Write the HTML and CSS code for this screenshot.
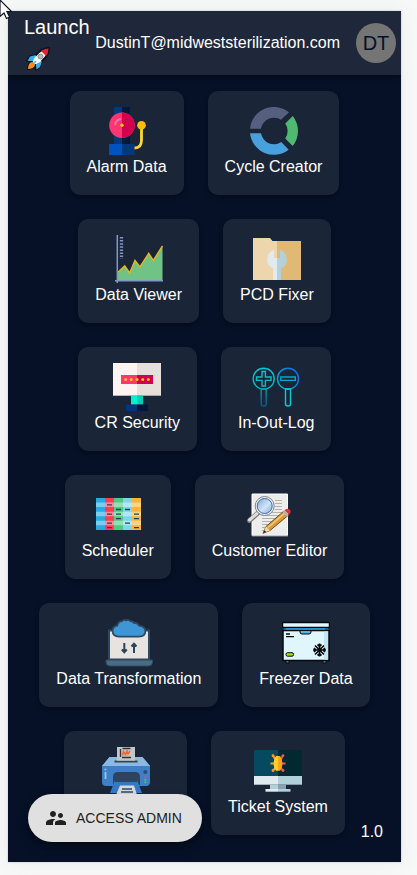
FILE: index.html
```html
<!DOCTYPE html>
<html lang="en">
<head>
<meta charset="utf-8">
<meta name="viewport" content="width=device-width, initial-scale=1">
<title>Launch</title>
<link rel="stylesheet" href="styles.css">
</head>
<body>
<svg class="pointer" viewBox="0 0 14 20" aria-hidden="true"><path d="M-4-4L11.500 11.500H7L9.500 17L6.500 18.500L4 13L0 16.500V0Z" fill="#fff" stroke="#111326" stroke-width="1.200"/></svg>
<div class="app">
  <header class="bar">
    <h1 class="brand">Launch
      <svg class="rocket" viewBox="0 0 24 24" aria-hidden="true">
        <path d="M23 1Q16 1 10 8L4 9.500L1 14L6 14.500L3 17L2 22L7 21L9.500 18L10 23L14 20L16 14Q23 8 23 1Z" fill="#fff" stroke="#101218" stroke-width="2" stroke-linejoin="round"/>
        <path d="M10 8L4 9.500L1.500 14L7 14ZM16 14L14 20L10.500 22.500L10 17Z" fill="#2fb2ef"/>
        <path d="M6 15Q2 16 2 22Q8 22 9 18Z" fill="#ff8b1f"/>
        <path d="M22.500 1.500Q18 1.500 15 4L20 9Q22.500 6 22.500 1.500Z" fill="#e5202f"/>
        <path d="M7 17L10 14" stroke="#2fb2ef" stroke-width="1.500"/>
        <circle cx="14.500" cy="9.500" r="2.500" fill="#b5b8bd" stroke="#858b93"/>
      </svg>
    </h1>
    <span class="email">DustinT@midweststerilization.com</span>
    <span class="avatar">DT</span>
  </header>

  <main class="tiles">
    <a class="tile" href="#">
      <svg viewBox="0 0 48 48" aria-hidden="true"><path d="M11 0h8v38h-8z" fill="#003a7d"/><path d="M19 0h8v38h-8z" fill="#001a3d"/><path d="M6 37h13v11H6z" fill="#0053bf"/><path d="M19 37h12.500v11H19z" fill="#003a7d"/><circle cx="19" cy="18.300" r="12.800" fill="#ff3574"/><path d="M19 5.500a12.800 12.800 0 0 1 0 25.600z" fill="#d0004f"/><path d="M12 18a7 7 0 0 1 6-6" fill="none" stroke="#ff7199" stroke-width="2"/><circle cx="19" cy="18.300" r="1.700" fill="#ffc80a"/><path d="M38.500 19v14q0 8-7 8" fill="none" stroke="#ffd72e" stroke-width="2.800"/><circle cx="38.500" cy="18.300" r="4.300" fill="#ffbd00"/></svg>
      <span>Alarm Data</span>
    </a>
    <a class="tile" href="#">
      <svg viewBox="0 0 48 48" aria-hidden="true"><path d="M0 21.700A24 24 0 0 1 39 5.300L31 12.700A13.200 13.200 0 0 0 11 21.700Z" fill="#556080"/><path d="M42.700 9A24 24 0 0 1 42.700 39L35.300 31.500A13.200 13.200 0 0 0 35.300 16.500Z" fill="#4fba6f"/><path d="M0 26.300A24 24 0 0 0 38.700 42.700L31.300 35A13.200 13.200 0 0 1 11 26.300Z" fill="#48a0dc"/></svg>
      <span>Cycle Creator</span>
    </a>
    <a class="tile" href="#">
      <svg viewBox="0 0 48 48" aria-hidden="true"><path d="M3 37.300L9.700 31L14.700 38L20 25.500L25 32L33.700 18.500L38.300 25.500L47.500 11V45H3Z" fill="#71c285"/><path d="M3 37.300L9.700 31L14.700 38L20 25.500L25 32L33.700 18.500L38.300 25.500L47.500 11" fill="none" stroke="#e3b522" stroke-width="1.500"/><path d="M2.300 0V48M0 45.700H48" stroke="#8296c9" stroke-width="1.500"/><path d="M6.500 2V24" stroke="#8296c9" stroke-width="3.300" stroke-dasharray="1.500 1.600"/></svg>
      <span>Data Viewer</span>
    </a>
    <a class="tile" href="#">
      <svg viewBox="0 0 48 48" aria-hidden="true"><path d="M0 3H17L19.500 6H24V45H0Z" fill="#edd5ae"/><path d="M24 6H48V45H24Z" fill="#e0ba75"/><path d="M21 15v8h3v22h-4V33.500A10 10 0 0 1 21 15z" fill="#e1ebef"/><path d="M27 15v8h-3v22h4V33.500A10 10 0 0 0 27 15z" fill="#b2d1d8"/></svg>
      <span>PCD Fixer</span>
    </a>
    <a class="tile" href="#">
      <svg viewBox="0 0 48 48" aria-hidden="true"><path d="M0 0h24v32.700H0z" fill="#fff3f2"/><path d="M24 0h24v32.700H24z" fill="#e7dfda"/><path d="M8 12h16v9H8z" fill="#ff3574"/><path d="M24 12h16v9H24z" fill="#d0004f"/><g fill="#ffc80a"><circle cx="12.700" cy="16.500" r="1.500"/><circle cx="18.200" cy="16.500" r="1.500"/><circle cx="24" cy="16.500" r="1.500"/><circle cx="29.700" cy="16.500" r="1.500"/><circle cx="35.300" cy="16.500" r="1.500"/></g><path d="M18 32.700h6v9h-6z" fill="#00f0d1"/><path d="M24 32.700h6v9h-6z" fill="#00cdb5"/><path d="M13 41.500h11V48H13z" fill="#00367a"/><path d="M24 41.500h11V48H24z" fill="#00193b"/></svg>
      <span>CR Security</span>
    </a>
    <a class="tile" href="#">
      <svg viewBox="0 0 48 48" aria-hidden="true">
        <defs><linearGradient id="in" x1="0" y1="0" x2="0" y2="1"><stop offset="0" stop-color="#07c6d2"/><stop offset="1" stop-color="#08b4c6"/></linearGradient><linearGradient id="stick" x1="0" y1="0" x2="0" y2="1"><stop offset="0" stop-color="#0899b4"/><stop offset="1" stop-color="#095a86"/></linearGradient><linearGradient id="out" x1="1" y1="0" x2="0" y2="1"><stop offset="0" stop-color="#0a6ce5"/><stop offset="1" stop-color="#08b8da"/></linearGradient></defs>
        <g fill="none" stroke="url(#in)" stroke-width="1.400"><circle cx="11.700" cy="15.700" r="10.500"/><path d="M10 8.500h3.400V14h5.600v3.400h-5.600V23H10v-5.600H4.500V14H10z"/></g>
        <path d="M9.200 26h5v15q0 2-2.500 2t-2.500-2z" fill="none" stroke="url(#stick)" stroke-width="1.400"/>
        <g fill="none" stroke-width="1.400"><circle cx="36" cy="15.700" r="10.500" stroke="url(#out)"/><path d="M28.800 14h14.500v3.400H28.800z" stroke="#09a0e0"/><path d="M33.500 26h5v15q0 2-2.500 2t-2.500-2z" stroke="#08cbd6"/></g>
      </svg>
      <span>In-Out-Log</span>
    </a>
    <a class="tile" href="#">
      <svg viewBox="0 0 48 48" aria-hidden="true"><path d="M2 7h9v32H2z" fill="#29abe2"/><path d="M11 7h9v32h-9z" fill="#ff3d52"/><path d="M20 7h9v32h-9z" fill="#4dcb84"/><path d="M29 7h9v32h-9z" fill="#7cd7ed"/><path d="M38 7h9v32h-9z" fill="#ffb33c"/><path d="M2 11.600h45v4.500H2zM2 20.700h45v4.500H2zM2 29.800h45v4.500H2z" fill="#fff" opacity=".4"/><path d="M13 13.900h5m-5 9.200h5m-5 9h5m-5 4.600h5M22 18.500h5m-5 4.600h5m-5 4.500h5M31 18.500h5m-5 13.600h5M40 23.100h5m-5 4.500h5m-5 9.100h5" stroke="#23425a" stroke-width="1.300"/></svg>
      <span>Scheduler</span>
    </a>
    <a class="tile" href="#">
      <svg viewBox="0 0 48 48" aria-hidden="true">
        <defs><linearGradient id="lens" x1="0" y1="0" x2="1" y2="1"><stop offset="0" stop-color="#7fa8df"/><stop offset=".55" stop-color="#d2e4f7"/><stop offset="1" stop-color="#7aaae3"/></linearGradient></defs>
        <path d="M6 3h35.500v41.500H6z" fill="#ededeb" stroke="#fff"/><path d="M6 45h36" stroke="#8e9296" stroke-width="1"/><path d="M29 9.500h7m-7 3h7m-7 3h7m-7 3h7M24 21.500h12M16 24.500h20m-20 3h14m-14 3h12m-12 3h10m-10 3h7m-7 3h4" stroke="#b0b1b1" stroke-width="1"/>
        <path d="M12 22L3.500 29.500" stroke="#777" stroke-width="5" stroke-linecap="round"/><path d="M11 22.500L3.500 29" stroke="#dedede" stroke-width="3" stroke-linecap="round"/>
        <circle cx="18.700" cy="15" r="9.500" fill="#eee" stroke="#858585"/><circle cx="18.700" cy="15" r="7.500" fill="url(#lens)" stroke="#3c6eaf"/>
        <path d="M17 42.300L20 35.500L38 20L42 24.500L24 39.500Z" fill="#d69a3b" stroke="#7a4b16"/><path d="M22 36.500L39.500 21.500" stroke="#f4cf78" stroke-width="1.500"/><path d="M17 42.300L20 35.500L24 39.500Z" fill="#f1d6a6"/><path d="M17 42.300l1.300-3 2 1.700z" fill="#291d16"/><path d="M36.500 21l2-1.700 4.300 4.700-2 1.700z" fill="#aeb5b8"/><path d="M38.500 19.300Q41 16.500 43.500 18.500T43 23.800z" fill="#ec3030"/>
      </svg>
      <span>Customer Editor</span>
    </a>
    <a class="tile" href="#">
      <svg viewBox="0 0 48 48" aria-hidden="true"><path d="M4 11.500h40v29H4z" fill="#e7e3e0" stroke="#2f4961" stroke-width="2"/><path d="M1 41h46.500v2q0 4-4 4H5q-4 0-4-4z" fill="#4a6c82" stroke="#2f4961"/><path d="M14 16.700Q8.500 16.500 8.500 12Q8.500 7.500 13 7.500Q13.500 3 17.500 3Q19 1 21 2.500Q23 1 25 3Q28 3 28.500 5Q32 4 33.500 7.500Q39.500 8 39.500 12Q39.500 16.700 34 16.700Z" fill="#3d96d5" stroke="#2f4961" stroke-width="3.500" paint-order="stroke"/><path d="M19.300 24v9m-2.500-2.500l2.500 2.700 2.500-2.700M29 34v-9m-2.500 2.500l2.500-2.700 2.500 2.700" fill="none" stroke="#2c4459" stroke-width="2"/></svg>
      <span>Data Transformation</span>
    </a>
    <a class="tile" href="#">
      <svg viewBox="0 0 48 48" aria-hidden="true"><path d="M4 41.500h3v2.500H4zM41 41.500h3v2.500h-3z" fill="#888" stroke="#07090c"/><path d="M1.500 8h45v4h-45z" fill="#1985cc"/><path d="M1 11.500h46v30H1z" fill="#dff6fd" stroke="#07090c" stroke-width="1.500"/><path d="M42 12.500h4v28h-4z" fill="#bfe8f7"/><path d="M1.500 3.500h45q1 0 1 1v3q0 1-1 1h-45q-1 0-1-1v-3q0-1 1-1z" fill="#e4f8fd" stroke="#07090c" stroke-width="1.500"/><path d="M4 10h39" stroke="#249be3" stroke-width="1.500"/><path d="M18 11.500h11v1.500q0 2-2 2h-7q-2 0-2-2z" fill="#4ab7ed" stroke="#07090c"/><path d="M4 15h4M4 17.700h8" stroke="#07090c" stroke-width="1.300"/><rect x="4" y="33.700" width="7.500" height="3.500" rx="1.500" fill="#a2df18" stroke="#07090c"/><g fill="none" stroke="#07090c" stroke-width="1.600"><path d="M37.500 24.500v13M31 31h13M33 26.500l9 9m0-9l-9 9M35.500 25.500l2 2 2-2m-4 11l2-2 2 2M32 29l2 2-2 2m11-4l-2 2 2 2"/></g></svg>
      <span>Freezer Data</span>
    </a>
    <a class="tile tile-printer" href="#" aria-label="Printer">
      <svg viewBox="0 0 48 48" aria-hidden="true"><path d="M7.500 10h33L48 19v16q0 4-4 4H4q-4 0-4-4V19z" fill="#3e7fc5"/><path d="M7.500 10h33L48 19H0z" fill="#8db8e2"/><path d="M12.500 13.500h23v2h-23z" fill="#2f455f"/><path d="M15 0h18v13.700H15z" fill="#c4c6c8"/><path d="M18.500 2v8m2-8.500h8M20 10.500h9" stroke="#30323a" stroke-width="1.300"/><path d="M20.500 8.500l1-4 2 3 1.500-3.500 1 3 2-3" fill="none" stroke="#ee6830" stroke-width="1.600"/><path d="M11 38V30q0-5 5-5h17q5 0 5 5v8z" fill="#2f435c"/><path d="M13 33h22l5 13H8z" fill="#3579c3"/><path d="M13 33h22v2H13z" fill="#24486e"/><path d="M18 38.500h14l3 9.500H14z" fill="#d5d8dc"/><path d="M20 42h10m-11 3h12" stroke="#34475e" stroke-width="1.300"/><path d="M3.500 25v7" stroke="#9ac2ec" stroke-width="1.800"/><circle cx="3.500" cy="22.500" r="1" fill="#9ac2ec"/><circle cx="43.300" cy="25" r="2" fill="#244e7e"/><circle cx="43.300" cy="30" r="1" fill="#e64a61"/><circle cx="43.300" cy="32.800" r="1" fill="#43c878"/><circle cx="43.300" cy="35.300" r="1" fill="#43c878"/></svg>
    </a>
    <a class="tile" href="#">
      <svg viewBox="0 0 48 48" aria-hidden="true"><path d="M0 3h24v26H0z" fill="#054a60"/><path d="M24 3h24v26H24z" fill="#022830"/><path d="M0 29h24v8.700H0z" fill="#e0ebf0"/><path d="M24 29h24v8.700H24z" fill="#b1d0d7"/><path d="M16 37.700h8V42h-8z" fill="#b1d0d7"/><path d="M24 37.700h8V42h-8z" fill="#86a2b4"/><path d="M11.500 42H24v2.700H11.500z" fill="#e0ebf0"/><path d="M24 42h12.500v2.700H24z" fill="#b1d0d7"/><path d="M21 12l-2-3.500M20 16.500h-3.500M21 21l-2 3" stroke="#ff9a20" stroke-width="2"/><path d="M27 12l2-3.500M28 16.500h3.500M27 21l2 3" stroke="#f15a51" stroke-width="2"/><path d="M24 9h-2q-2.500 3-2.500 7.500T22 23.700h2z" fill="#ffd126"/><path d="M24 9h2q2.500 3 2.500 7.500T26 23.700h-2z" fill="#ffa51f"/><g fill="#ff9a20"><circle cx="19" cy="8.700" r="1.400"/><circle cx="19" cy="23.500" r="1.400"/></g><g fill="#f15a51"><circle cx="29" cy="8.700" r="1.400"/><circle cx="29" cy="23.500" r="1.400"/></g></svg>
      <span>Ticket System</span>
    </a>
  </main>

  <button class="admin" type="button">
    <svg viewBox="0 0 24 24" aria-hidden="true"><path fill="currentColor" d="M16.500 12c1.380 0 2.490-1.120 2.490-2.500S17.880 7 16.500 7C15.120 7 14 8.120 14 9.500s1.120 2.500 2.500 2.500zM9 11c1.660 0 2.990-1.340 2.990-3S10.660 5 9 5C7.340 5 6 6.340 6 8s1.340 3 3 3zm7.500 3c-1.830 0-5.500.920-5.500 2.750V19h11v-2.250c0-1.830-3.670-2.750-5.500-2.750zM9 13c-2.330 0-7 1.170-7 3.500V19h7v-2.250c0-.850.330-2.340 2.370-3.470C10.500 13.100 9.660 13 9 13z"/></svg>
    <span>ACCESS ADMIN</span>
  </button>
  <span class="version">1.0</span>
</div>
</body>
</html>
```
FILE: styles.css
```css
* {
  box-sizing: border-box;
}

body {
  margin: 0;
  padding: 11px 16px 13px 8px;
  background: #f7f9f8;
  color: #fff;
  font: 16px/24px "Liberation Sans", Arial, sans-serif;
}

.app {
  position: relative;
  overflow: clip;
  background: #061127;
  box-shadow: 0 0 2px #bfc4ca, 0 0 20px #e9eceb;
}

.pointer {
  position: absolute;
  top: 0;
  left: 0;
  z-index: 2;
  width: 14px;
  height: 20px;
}

.bar {
  position: relative;
  display: flex;
  align-items: center;
  min-height: 64px;
  padding: 0 5px 0 16px;
  background: #1f273b;
  box-shadow: 0 2px 5px rgba(0, 0, 0, 0.4);
}

.brand {
  flex: 1 1 0;
  margin: 0;
  font-size: 20px;
  font-weight: 400;
  line-height: 32px;
}

.rocket {
  display: block;
  width: 24px;
  height: 24px;
  margin: 4px 0 4px 2px;
}

.email {
  margin-right: 16px;
}

.avatar {
  display: flex;
  align-items: center;
  justify-content: center;
  width: 40px;
  height: 40px;
  border-radius: 50%;
  background: #757575;
  color: #061127;
  font-size: 20px;
}

.tiles {
  display: flex;
  flex-wrap: wrap;
  justify-content: center;
  gap: 24px;
  padding: 16px 16px 27px;
}

.tile {
  display: flex;
  flex-direction: column;
  align-items: center;
  min-height: 104px;
  padding: 16px 17px;
  border-radius: 10px;
  background: #1b2538;
  box-shadow: 0 2px 4px rgba(0, 0, 0, 0.35);
  color: inherit;
  text-decoration: none;
}

.tile svg {
  width: 48px;
  height: 48px;
}

.tile-printer {
  min-width: 123px;
}

.admin {
  position: absolute;
  bottom: 20px;
  left: 20px;
  display: flex;
  align-items: center;
  gap: 8px;
  height: 48px;
  padding: 0 20px 0 16px;
  border: 0;
  border-radius: 24px;
  background: #e0e0e0;
  box-shadow: 0 3px 5px rgba(0, 0, 0, 0.3), 0 6px 12px rgba(0, 0, 0, 0.2);
  color: #212121;
  font: 14px/24px "Liberation Sans", Arial, sans-serif;
}

.admin svg {
  width: 24px;
  height: 24px;
}

.version {
  position: absolute;
  right: 18px;
  bottom: 18px;
}
```
